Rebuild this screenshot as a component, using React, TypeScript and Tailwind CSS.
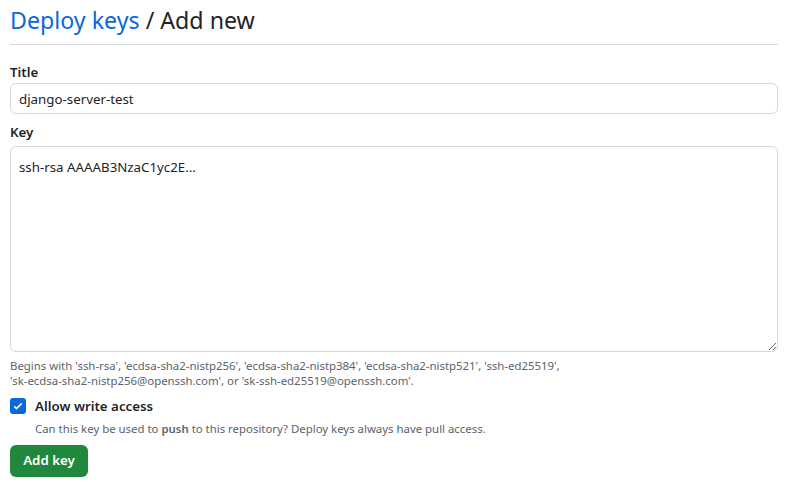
import React from 'react';

export default function App() {
  return (
    <div className="min-h-screen bg-white px-[10px] pt-[4px] text-[#1f2328] font-['Noto_Sans',sans-serif]">
      <div className="w-[768px]">
        <h2 className="border-b border-[#d1d9e0] pb-[8px] text-[23.2px] leading-[32px]">
          <a className="text-[#0969da]" href="#">Deploy keys</a> / Add new
        </h2>

        <form className="mt-[17px]">
          <label className="block text-[13.3px] font-semibold leading-[20px]">Title</label>
          <input
            className="mt-[1px] h-[31px] w-full rounded-[6px] border border-[#d1d9e0] px-[8px] text-[13.3px] outline-none"
            defaultValue="django-server-test"
          />

          <label className="mt-[8px] block text-[13.3px] font-semibold leading-[20px]">Key</label>
          <textarea
            className="mt-[4px] block h-[206px] w-full rounded-[6px] border border-[#d1d9e0] px-[8px] py-[10px] text-[13.3px] leading-[20px] outline-none"
            defaultValue="ssh-rsa AAAAB3NzaC1yc2E..."
          />
          <p className="mt-[6px] text-[11.4px] leading-[15px] text-[#59636e]">
            Begins with 'ssh-rsa', 'ecdsa-sha2-nistp256', 'ecdsa-sha2-nistp384', 'ecdsa-sha2-nistp521', 'ssh-ed25519',
            <br />
            'sk-ecdsa-sha2-nistp256@openssh.com', or 'sk-ssh-ed25519@openssh.com'.
          </p>

          <div className="mt-[8px] flex items-center gap-[9px]">
            <span className="flex h-[16px] w-[16px] items-center justify-center rounded-[3px] bg-[#0969da]">
              <svg viewBox="0 0 16 16" className="h-[12px] w-[12px]" fill="none" stroke="white" strokeWidth="2">
                <path d="M3 8.5l3 3 7-7" />
              </svg>
            </span>
            <span className="text-[13.3px] font-semibold leading-[20px]">Allow write access</span>
          </div>
          <p className="mt-[5px] pl-[25px] text-[11.4px] leading-[16px] text-[#59636e]">
            Can this key be used to <strong className="font-semibold">push</strong> to this repository? Deploy keys always have pull access.
          </p>

          <button
            type="button"
            className="mt-[8px] h-[32px] w-[78px] rounded-[6px] bg-[#1f883d] text-[13.3px] font-semibold text-white"
          >
            Add key
          </button>
        </form>
      </div>
    </div>
  );
}
